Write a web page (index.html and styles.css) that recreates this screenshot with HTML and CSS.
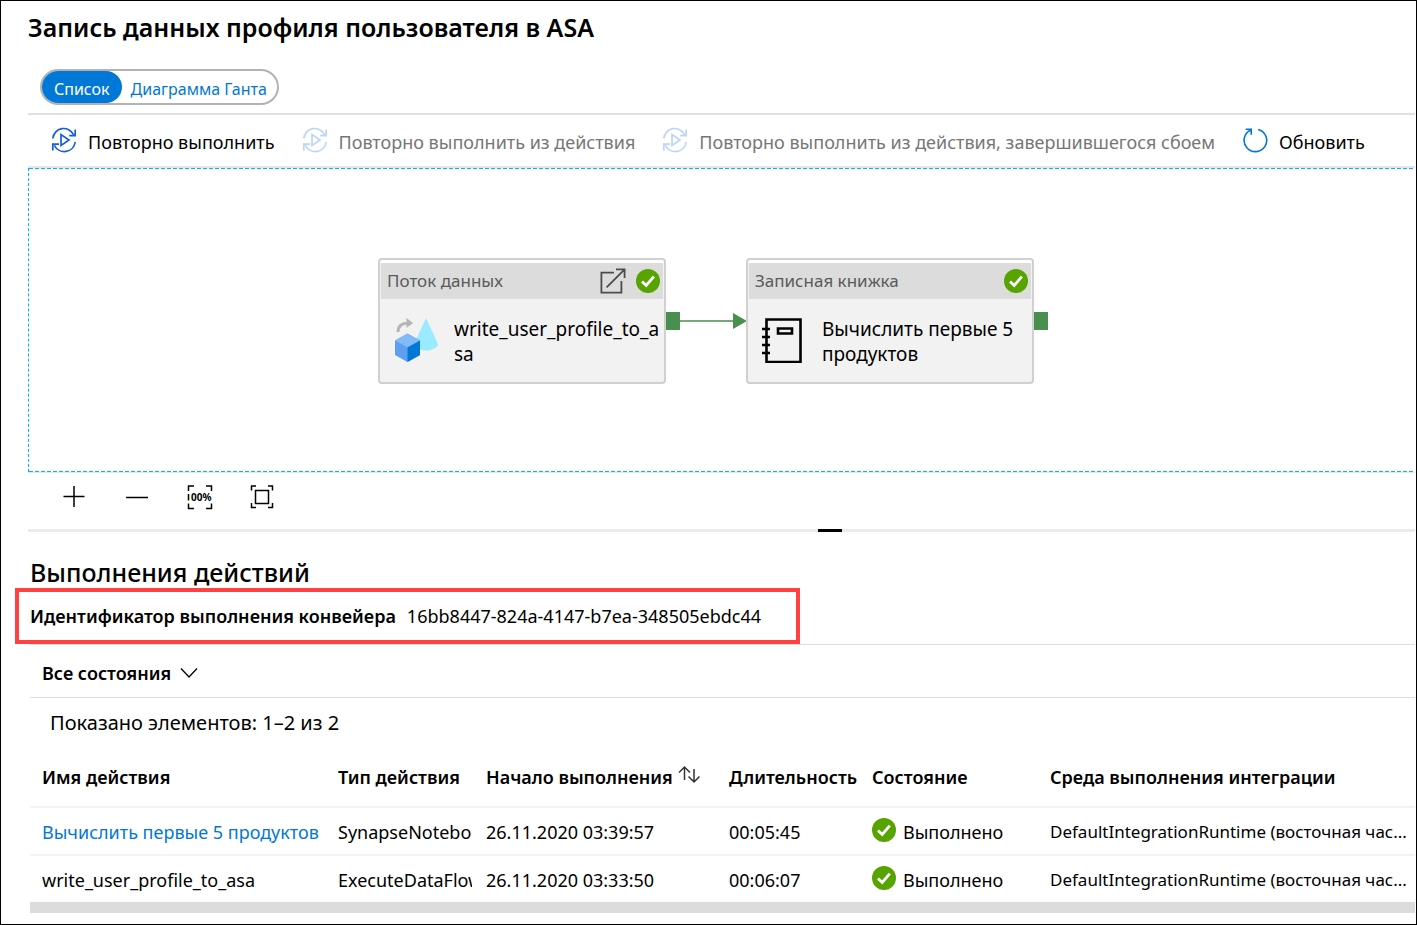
FILE: index.html
```html
<!DOCTYPE html>
<html lang="ru">
<head>
<meta charset="utf-8">
<title>Запись данных профиля пользователя в ASA</title>
<link rel="stylesheet" href="styles.css">
</head>
<body>
<svg class="defs" aria-hidden="true">
  <symbol id="rerun" viewBox="0 0 26 26">
    <g fill="none" stroke="currentColor" stroke-width="1.7">
      <path d="M1.8 11.5A11 11 0 0 1 22.6 7.6M24.2 2.6V8.6H18.2"/>
      <path d="M24.2 15A11 11 0 0 1 3.4 18.4M1.8 23.6V17.2H8"/>
      <path d="M10 7.6V18.4L18 13Z"/>
    </g>
  </symbol>
  <symbol id="success" viewBox="0 0 24 24">
    <circle cx="12" cy="12" r="12" fill="#57a300"/>
    <path d="M6 12.4L10.2 16.5L17.8 7.6" fill="none" stroke="#fff" stroke-width="2.8"/>
  </symbol>
</svg>
<main class="page">
  <h1 class="title">Запись данных профиля пользователя в ASA</h1>
  <div class="switch">
    <button class="switch-item active" type="button">Список</button>
    <button class="switch-item" type="button">Диаграмма Ганта</button>
  </div>
  <div class="toolbar">
    <button class="tool" type="button"><svg class="tool-icon rerun"><use href="#rerun"/></svg>Повторно выполнить</button>
    <button class="tool" type="button" disabled><svg class="tool-icon rerun"><use href="#rerun"/></svg>Повторно выполнить из действия</button>
    <button class="tool" type="button" disabled><svg class="tool-icon rerun"><use href="#rerun"/></svg>Повторно выполнить из действия, завершившегося сбоем</button>
    <button class="tool" type="button"><svg class="tool-icon refresh" viewBox="0 0 26 26"><path d="M16.2 2.4A11.3 11.3 0 1 1 8.4 3.2M3.6 2.2H9.2V7.8" fill="none" stroke="currentColor" stroke-width="1.6"/></svg>Обновить</button>
  </div>
  <section class="canvas">
    <article class="node flow">
      <header class="node-head">
        <span class="node-type">Поток данных</span>
        <svg class="open" viewBox="0 0 26 26"><path d="M14 4.6H1.4V24.6H21.4V13M6.6 19.4L24.4 1.6M16 1.4H24.6V10" fill="none" stroke="#4c4c4c" stroke-width="1.8"/></svg>
        <svg class="status"><use href="#success"/></svg>
      </header>
      <div class="node-body">
        <svg class="node-icon" viewBox="0 0 46 46">
          <path d="M32 1L44 27C44 31 37 33.500 32 33.500C27 33.500 20 31 20 27Z" fill="#9aebff"/>
          <path d="M4 15C4 9 8 6 14 6" fill="none" stroke="#b5b5b5" stroke-width="3"/>
          <path d="M12.500 1L19 6L12.500 11Z" fill="#b5b5b5"/>
          <path d="M13.500 16.500L26 23.500V38L13.500 45L1 38V23.500Z" fill="#5ea0ef"/>
          <path d="M13.500 16.500L26 23.500L13.500 30.500L1 23.500Z" fill="#83b9f9"/>
          <path d="M26 23.500V38L13.500 45V30.500Z" fill="#0078d4"/>
        </svg>
        <span class="node-name">write_user_profile_to_asa</span>
      </div>
    </article>
    <svg class="link" viewBox="0 0 81 20">
      <path d="M0 1H14V19H0ZM13 9.300H68V10.700H13ZM67 2L81 10L67 18Z" fill="#498f4f"/>
    </svg>
    <article class="node book">
      <header class="node-head">
        <span class="node-type">Записная книжка</span>
        <svg class="status"><use href="#success"/></svg>
      </header>
      <div class="node-body">
        <svg class="node-icon" viewBox="0 0 46 46"><path d="M4.500 2.500H38.500V45H4.500ZM16 11.500H30V16.500H16ZM0 12H8M0 20H8M0 28H8M0 36H8" fill="none" stroke="#000" stroke-width="2.600"/></svg>
        <span class="node-name">Вычислить первые 5 продуктов</span>
      </div>
    </article>
    <span class="port"></span>
  </section>
  <div class="zoombar">
    <button type="button" class="zoom" aria-label="Увеличить"><svg viewBox="0 0 26 26"><path d="M2.500 12.500H23.500M13 2V23" stroke="#000" stroke-width="1.500"/></svg></button>
    <button type="button" class="zoom" aria-label="Уменьшить"><svg viewBox="0 0 26 26"><path d="M2 13.500H24" stroke="#000" stroke-width="1.500"/></svg></button>
    <button type="button" class="zoom" aria-label="Масштаб 100%"><svg viewBox="0 0 26 26"><path d="M7 2H1.500V7M19 2H24.500V7M7 24.500H1.500V19.500M19 24.500H24.500V19.500M1.500 10V16.500" fill="none" stroke="#000" stroke-width="1.500"/><text x="4" y="16.500" class="zoom-text">00%</text></svg></button>
    <button type="button" class="zoom" aria-label="По размеру"><svg viewBox="0 0 26 26"><path d="M6 2H1.500V6.500M18 2H22.500V6.500M6 23.500H1.500V19M18 23.500H22.500V19M5.500 6.500H18.500V19.500H5.500Z" fill="none" stroke="#000" stroke-width="1.500"/></svg></button>
  </div>
  <div class="splitter"><span class="grip"></span></div>
  <section class="runs">
    <h2 class="subtitle">Выполнения действий</h2>
    <div class="run-id"><strong class="run-label">Идентификатор выполнения конвейера</strong><span class="run-value">16bb8447-824a-4147-b7ea-348505ebdc44</span></div>
    <div class="filter">
      <select class="state" aria-label="Состояние"><option>Все состояния</option></select>
      <svg class="chevron" viewBox="0 0 18 12"><path d="M1 1.500L9 10L17 1.500" fill="none" stroke="#000" stroke-width="1.300"/></svg>
    </div>
    <p class="count">Показано элементов: 1–2 из 2</p>
    <table class="grid">
      <colgroup><col class="c-name"><col class="c-type"><col class="c-start"><col class="c-time"><col class="c-state"><col></colgroup>
      <thead>
        <tr><th>Имя действия</th><th>Тип действия</th><th>Начало выполнения<svg class="sort" viewBox="0 0 24 20"><path d="M7.500 15V2M2 7.500L7.500 2L13 7.500M17 4V17M11.500 11.500L17 17L22.500 11.500" fill="none" stroke="#333" stroke-width="1.500"/></svg></th><th>Длительность</th><th>Состояние</th><th>Среда выполнения интеграции</th></tr>
      </thead>
      <tbody>
        <tr><td><a class="link-text" href="#">Вычислить первые 5 продуктов</a></td><td><div class="clip">SynapseNotebook</div></td><td>26.11.2020 03:39:57</td><td>00:05:45</td><td><span class="done"><svg class="status"><use href="#success"/></svg>Выполнено</span></td><td class="runtime">DefaultIntegrationRuntime (восточная час...</td></tr>
        <tr><td>write_user_profile_to_asa</td><td><div class="clip">ExecuteDataFlow</div></td><td>26.11.2020 03:33:50</td><td>00:06:07</td><td><span class="done"><svg class="status"><use href="#success"/></svg>Выполнено</span></td><td class="runtime">DefaultIntegrationRuntime (восточная час...</td></tr>
      </tbody>
    </table>
    <div class="scrollbar"></div>
  </section>
</main>
</body>
</html>
```
FILE: styles.css
```css
* { box-sizing: border-box; }
body {
  margin: 0;
  background: #fff;
  color: #000;
  font: 18px/24px "Noto Sans", "Open Sans", sans-serif;
}
button, select { font: inherit; color: inherit; background: none; border: 0; padding: 0; margin: 0; }
svg { display: block; flex: none; }
.defs { position: absolute; width: 0; height: 0; }
.page { min-height: 100vh; border: 1px solid #000; padding: 10px 1px 10px 27px; overflow: hidden; }
.title { margin: 0 0 26px; font-size: 25px; line-height: 32px; font-weight: 600; }
.switch { display: flex; width: fit-content; height: 36px; margin: 0 0 8px 12px; border: 2px solid #b3b3b3; border-radius: 18px; font-size: 16px; }
.switch-item { padding: 4px 10px 0 9px; color: #0078d4; white-space: nowrap; }
.switch-item.active { padding: 4px 12px 0; border-radius: 16px; background: #0078d7; color: #fff; }
.toolbar { display: flex; align-items: center; gap: 27px; height: 55px; padding-left: 23px; border-top: 2px solid #e1e1e1; border-bottom: 2px solid #e6e6e6; }
.tool { display: flex; align-items: center; gap: 11px; padding-top: 3px; white-space: nowrap; }
.tool:disabled { color: #767676; }
.tool-icon { width: 26px; height: 26px; margin-bottom: 4px; }
.rerun { color: #155fd8; }
.tool:disabled .rerun { color: #bcd5f7; }
.refresh { color: #0078d4; }

.canvas {
  --dash: repeating-linear-gradient(90deg, #00b7f0 0 4px, #fff 4px 6px);
  position: relative;
  height: 304px;
  border-left: 1px dashed #00b7f0;
  background: var(--dash) top / 100% 1px no-repeat, var(--dash) bottom / 100% 1px no-repeat;
}
.node { position: absolute; top: 90px; width: 288px; height: 126px; padding: 3px 1px 1px; border: 2px solid #d0d0d0; border-radius: 4px; background: linear-gradient(#fff 3px, #f2f2f2 3px); }
.flow { left: 349px; }
.book { left: 717px; }
.link { position: absolute; left: 637px; top: 143px; width: 81px; height: 20px; }
.port { position: absolute; left: 1005px; top: 144px; width: 14px; height: 18px; background: #498f4f; }
.node-head { display: flex; align-items: center; gap: 10px; height: 36px; padding: 0 3px 0 6px; background: #dcdcdc; color: #5a5a5a; font-size: 17px; }
.node-type { flex: 1; }
.open { width: 26px; height: 26px; }
.status { width: 24px; height: 24px; }
.node-body { display: flex; gap: 14px; padding: 18px 0 0 13px; }
.node-icon { width: 46px; height: 46px; }
.node-name { flex: 1; font-size: 19px; line-height: 25px; }
.flow .node-name { word-break: break-all; }

.zoombar { display: flex; gap: 37px; padding: 11px 0 19px 33px; border-top: 1px solid #e6e6e6; }
.zoom { width: 26px; height: 26px; }
.zoom svg { width: 26px; height: 26px; }
.zoom-text { font: 700 10px "Noto Sans", sans-serif; }
.splitter { height: 3px; padding-left: 790px; background: #ebebeb; }
.grip { display: block; width: 24px; height: 3px; background: #000; }

.runs { padding: 24px 0 0 2px; }
.subtitle { margin: 0; font-size: 25px; line-height: 32px; font-weight: 500; }
.run-id { display: flex; align-items: center; gap: 11px; width: fit-content; height: 56px; margin-left: -15px; padding: 0 35px 0 11px; border: 4px solid #ff4141; white-space: nowrap; }
.run-label { font-weight: 600; }
.filter { display: flex; align-items: center; gap: 8px; height: 54px; padding: 4px 0 0 12px; border-top: 1px solid #dedede; border-bottom: 1px solid #dedede; }
.state { appearance: none; font-weight: 600; }
.chevron { width: 18px; height: 12px; }
.count { margin: 0; padding: 13px 20px; font-size: 20px; }
.grid { width: 100%; table-layout: fixed; border-collapse: separate; border-spacing: 0; }
.c-name { width: 296px; }
.c-type { width: 148px; }
.c-start { width: 243px; }
.c-time { width: 143px; }
.c-state { width: 178px; }
.grid th { height: 58px; padding: 0 0 0 12px; text-align: left; font-weight: 600; white-space: nowrap; }
.grid td { height: 48px; padding: 2px 0 0 12px; border-top: 2px solid #f3f3f3; white-space: nowrap; }
.grid .runtime { font-size: 17px; }
.sort { display: inline-block; width: 24px; height: 20px; margin-left: 4px; vertical-align: top; }
.clip { margin-right: 2px; overflow: hidden; }
.link-text { color: #0078d4; text-decoration: none; }
.done { display: flex; align-items: center; gap: 7px; }
.done .status { margin-bottom: 4px; }
.scrollbar { height: 11px; background: #dcdcdc; }
```
